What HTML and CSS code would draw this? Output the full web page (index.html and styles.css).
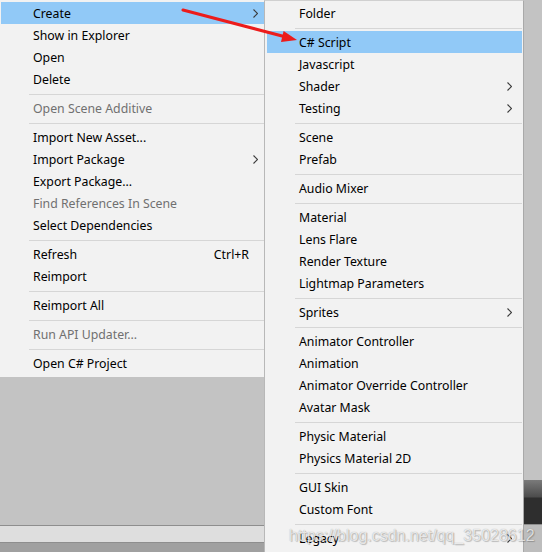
FILE: index.html
```html
<!DOCTYPE html>
<html>
<head>
<meta charset="utf-8">
<link rel="stylesheet" href="styles.css">
</head>
<body>
<div class="screen">
  <div class="col-left">
    <div class="menu menu-main">
      <div class="item active"><span>Create</span><svg class="chev" width="5" height="9" viewBox="0 0 5 9"><polyline points="0.5,0.5 4.5,4.5 0.5,8.5"/></svg></div>
      <div class="item"><span>Show in Explorer</span></div>
      <div class="item"><span>Open</span></div>
      <div class="item"><span>Delete</span></div>
      <div class="sep"></div>
      <div class="item disabled"><span>Open Scene Additive</span></div>
      <div class="sep"></div>
      <div class="item"><span>Import New Asset...</span></div>
      <div class="item"><span>Import Package</span><svg class="chev" width="5" height="9" viewBox="0 0 5 9"><polyline points="0.5,0.5 4.5,4.5 0.5,8.5"/></svg></div>
      <div class="item"><span>Export Package...</span></div>
      <div class="item disabled"><span>Find References In Scene</span></div>
      <div class="item"><span>Select Dependencies</span></div>
      <div class="sep"></div>
      <div class="item"><span>Refresh</span><span class="shortcut">Ctrl+R</span></div>
      <div class="item"><span>Reimport</span></div>
      <div class="sep"></div>
      <div class="item"><span>Reimport All</span></div>
      <div class="sep"></div>
      <div class="item disabled"><span>Run API Updater...</span></div>
      <div class="sep"></div>
      <div class="item"><span>Open C# Project</span></div>
    </div>
    <div class="pane"></div>
    <div class="statusbar"></div>
    <div class="bottombar"></div>
  </div>
  <div class="menu menu-sub">
    <div class="item"><span>Folder</span></div>
    <div class="sep"></div>
    <div class="item active"><span>C# Script</span></div>
    <div class="item"><span>Javascript</span></div>
    <div class="item"><span>Shader</span><svg class="chev" width="5" height="9" viewBox="0 0 5 9"><polyline points="0.5,0.5 4.5,4.5 0.5,8.5"/></svg></div>
    <div class="item"><span>Testing</span><svg class="chev" width="5" height="9" viewBox="0 0 5 9"><polyline points="0.5,0.5 4.5,4.5 0.5,8.5"/></svg></div>
    <div class="sep"></div>
    <div class="item"><span>Scene</span></div>
    <div class="item"><span>Prefab</span></div>
    <div class="sep"></div>
    <div class="item"><span>Audio Mixer</span></div>
    <div class="sep"></div>
    <div class="item"><span>Material</span></div>
    <div class="item"><span>Lens Flare</span></div>
    <div class="item"><span>Render Texture</span></div>
    <div class="item"><span>Lightmap Parameters</span></div>
    <div class="sep"></div>
    <div class="item"><span>Sprites</span><svg class="chev" width="5" height="9" viewBox="0 0 5 9"><polyline points="0.5,0.5 4.5,4.5 0.5,8.5"/></svg></div>
    <div class="sep"></div>
    <div class="item"><span>Animator Controller</span></div>
    <div class="item"><span>Animation</span></div>
    <div class="item"><span>Animator Override Controller</span></div>
    <div class="item"><span>Avatar Mask</span></div>
    <div class="sep"></div>
    <div class="item"><span>Physic Material</span></div>
    <div class="item"><span>Physics Material 2D</span></div>
    <div class="sep"></div>
    <div class="item"><span>GUI Skin</span></div>
    <div class="item"><span>Custom Font</span></div>
    <div class="sep"></div>
    <div class="item"><span>Legacy</span><svg class="chev" width="5" height="9" viewBox="0 0 5 9"><polyline points="0.5,0.5 4.5,4.5 0.5,8.5"/></svg></div>
  </div>
  <div class="col-right">
    <div class="rfill"></div>
    <div class="darkbar"></div>
    <div class="rbottom"></div>
  </div>
  <svg class="arrow" width="542" height="552" viewBox="0 0 542 552">
    <line x1="183" y1="10" x2="284" y2="36.5" stroke="#ec1c1c" stroke-width="3" stroke-linecap="round"/>
    <polygon points="297,40 283.6,31 281,42" fill="#ec1c1c"/>
  </svg>
  <div class="watermark">https://blog.csdn.net/qq_35028612</div>
</div>
</body>
</html>
```
FILE: styles.css
```css
html, body {
  margin: 0;
  padding: 0;
  background: #c3c3c3;
}
.screen {
  position: relative;
  width: 542px;
  height: 552px;
  overflow: hidden;
  display: flex;
  font-family: "Noto Sans", "Liberation Sans", sans-serif;
  font-size: 12.3px;
  color: #000;
}
.col-left {
  width: 264px;
  display: flex;
  flex-direction: column;
  flex-shrink: 0;
}
.menu {
  background: #f2f2f2;
  box-sizing: border-box;
}
.menu-main {
  height: 377px;
  padding: 2px 0 3px 1px;
}
.pane {
  height: 148px;
  background: #c3c3c3;
  border-bottom: 1px solid #8e8e8e;
}
.statusbar {
  height: 16px;
  background: #dedede;
  border-bottom: 1px solid #8e8e8e;
}
.bottombar {
  flex: 1;
  background: #a0a0a0;
}
.menu-sub {
  width: 260px;
  flex-shrink: 0;
  border-left: 1px solid #b8b8b8;
  border-right: 1px solid #a9a9a9;
  border-top: 1px solid #d0d0d0;
  padding: 1px 1px 0 2px;
}
.item {
  height: 22px;
  display: flex;
  align-items: center;
  padding-left: 32px;
  white-space: nowrap;
}
.menu-main .item {
  padding-right: 6px;
}
.menu-sub .item {
  padding-right: 10px;
}
.item.active {
  background: #91c9f7;
}
.item.disabled {
  color: #707070;
}
.chev {
  margin-left: auto;
  fill: none;
  stroke: #3a3a3a;
  stroke-width: 1.1;
}
.shortcut {
  margin-left: auto;
  margin-right: 9px;
}
.sep {
  height: 1px;
  margin: 4px 0 2px 28px;
  background: #d6d6d6;
}
.col-right {
  flex: 1;
  display: flex;
  flex-direction: column;
}
.rfill {
  height: 480px;
  background: #c3c3c3;
}
.darkbar {
  height: 44px;
  background: linear-gradient(#7a7a7a 0, #4c4c4c 17px, #2e2e2e 18px, #2e2e2e 100%);
  border-bottom: 1px solid #8e8e8e;
}
.rbottom {
  flex: 1;
  background: #bdbdbd;
}
.arrow {
  position: absolute;
  left: 0;
  top: 0;
  pointer-events: none;
}
.watermark {
  position: absolute;
  left: 289px;
  top: 527px;
  font-family: "Liberation Sans", Arial, sans-serif;
  font-size: 16px;
  color: rgba(255, 255, 255, 0.75);
  text-shadow: 0 0 1px rgba(0, 0, 0, 0.35), 1px 1px 1px rgba(0, 0, 0, 0.2);
  white-space: nowrap;
}
```
